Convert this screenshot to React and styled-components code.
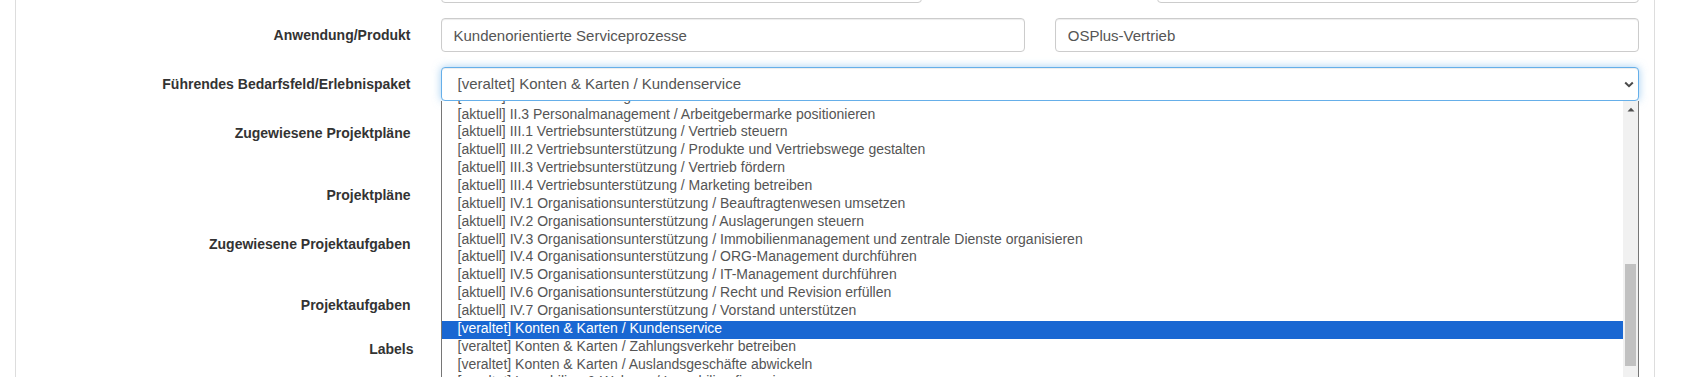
import React from "react";
import styled, { createGlobalStyle } from "styled-components";

const GlobalStyle = createGlobalStyle`
  html, body {
    margin: 0;
    padding: 0;
    height: 100%;
    overflow: hidden;
    background: #fff;
  }
  body {
    font-family: "Liberation Sans", Arial, Helvetica, sans-serif;
    font-size: 14px;
    line-height: 1.42857;
    color: #333;
  }
  *, *::before, *::after { box-sizing: border-box; }
`;

const Panel = styled.section`
  margin: -31px 0 0 15px;
  width: 1640px;
  min-height: 520px;
  padding: 0 15px;
  border-left: 1px solid #ddd;
  border-right: 1px solid #ddd;
  background: #fff;
`;

const Row = styled.div`
  display: flex;
  margin: 0 -15px;
`;

const FormGroup = styled(Row)`
  margin-bottom: 15px;
`;

const Col = styled.div`
  flex: none;
  width: ${(p) => (p.$span / 12) * 100}%;
  padding: 0 15px;
  position: relative;
`;

const ControlLabel = styled.label`
  flex: none;
  width: 25%;
  padding: 7px ${(p) => p.$pr ?? 15}px 0 15px;
  text-align: right;
  font-weight: bold;
  font-size: 14px;
  line-height: 20px;
  color: #333;
  white-space: nowrap;
`;

const TextInput = styled.input`
  display: block;
  width: 100%;
  height: 34px;
  padding: 6px 12px;
  font: 15px/20px "Liberation Sans", Arial, Helvetica, sans-serif;
  color: #555;
  background: #fff;
  border: 1px solid #ccc;
  border-radius: 4px;
  box-shadow: inset 0 1px 1px rgba(0, 0, 0, 0.075);
  outline: none;
`;

const FieldBox = styled.div`
  height: ${(p) => p.$h}px;
  border: 1px solid #ccc;
  border-radius: 4px;
  background: #fff;
`;

const SelectBox = styled.div`
  display: flex;
  align-items: center;
  height: 34px;
  padding: 0 4px 0 16px;
  font-size: 15px;
  line-height: 20px;
  color: #555;
  background: #fff;
  border: 1px solid #66afe9;
  border-radius: 4px;
  box-shadow: inset 0 1px 1px rgba(0, 0, 0, 0.075),
    0 0 8px rgba(102, 175, 233, 0.6);
`;

const SelectValue = styled.span`
  flex: 1;
  white-space: nowrap;
  overflow: hidden;
`;

const Dropdown = styled.div`
  position: absolute;
  top: 34px;
  left: 15px;
  right: 15px;
  height: 340px;
  display: flex;
  background: #fff;
  border: 1px solid #767676;
  border-top: none;
  z-index: 10;
`;

const OptionViewport = styled.div`
  flex: 1;
  overflow: hidden;
`;

const OptionList = styled.ul`
  list-style: none;
  margin: -12.3px 0 0;
  padding: 0;
`;

const Option = styled.li`
  height: 17.87px;
  line-height: 14.87px;
  padding: 0 0 3px 16px;
  font-size: 14px;
  white-space: nowrap;
  color: ${(p) => (p.$selected ? "#fff" : "#555")};
  background: ${(p) => (p.$selected ? "#1967d2" : "transparent")};
`;

const ScrollTrack = styled.div`
  flex: none;
  width: 15px;
  display: flex;
  flex-direction: column;
  align-items: center;
  background: #f1f1f1;
`;

const ScrollArrow = styled.div`
  height: 17px;
  width: 15px;
  display: flex;
  align-items: center;
  justify-content: center;
`;

const ScrollThumb = styled.div`
  margin-top: ${(p) => p.$offset}px;
  width: 11px;
  height: ${(p) => p.$size}px;
  background: #c1c1c1;
`;

const options = [
  "[aktuell] II.2 Personalmanagement / Personal entwickeln",
  "[aktuell] II.3 Personalmanagement / Arbeitgebermarke positionieren",
  "[aktuell] III.1 Vertriebsunterstützung / Vertrieb steuern",
  "[aktuell] III.2 Vertriebsunterstützung / Produkte und Vertriebswege gestalten",
  "[aktuell] III.3 Vertriebsunterstützung / Vertrieb fördern",
  "[aktuell] III.4 Vertriebsunterstützung / Marketing betreiben",
  "[aktuell] IV.1 Organisationsunterstützung / Beauftragtenwesen umsetzen",
  "[aktuell] IV.2 Organisationsunterstützung / Auslagerungen steuern",
  "[aktuell] IV.3 Organisationsunterstützung / Immobilienmanagement und zentrale Dienste organisieren",
  "[aktuell] IV.4 Organisationsunterstützung / ORG-Management durchführen",
  "[aktuell] IV.5 Organisationsunterstützung / IT-Management durchführen",
  "[aktuell] IV.6 Organisationsunterstützung / Recht und Revision erfüllen",
  "[aktuell] IV.7 Organisationsunterstützung / Vorstand unterstützen",
  "[veraltet] Konten & Karten / Kundenservice",
  "[veraltet] Konten & Karten / Zahlungsverkehr betreiben",
  "[veraltet] Konten & Karten / Auslandsgeschäfte abwickeln",
  "[veraltet] Immobilien & Wohnen / Immobilien finanzieren",
  "[veraltet] Immobilien & Wohnen / Immobilien vermitteln",
  "[veraltet] Vorsorge & Absicherung / Altersvorsorge planen",
];

const SELECTED = "[veraltet] Konten & Karten / Kundenservice";

function Chevron() {
  return (
    <svg width="10" height="7" viewBox="0 0 10 7" aria-hidden="true">
      <path d="M1.2 1.5 L5 5.2 L8.8 1.5" fill="none" stroke="#4a4a4a" strokeWidth="2" />
    </svg>
  );
}

function UpTriangle() {
  return (
    <svg width="8" height="5" viewBox="0 0 8 5" aria-hidden="true">
      <path d="M0.5 4.5 L4 0.8 L7.5 4.5 Z" fill="#505050" />
    </svg>
  );
}

export default function App() {
  return (
    <>
      <GlobalStyle />
      <Panel>
        <FormGroup>
          <ControlLabel>Produktverantwortung</ControlLabel>
          <Col $span={9}>
            <Row>
              <Col $span={5}>
                <TextInput readOnly value="" />
              </Col>
              <Col $span={2} />
              <Col $span={5}>
                <TextInput readOnly value="" />
              </Col>
            </Row>
          </Col>
        </FormGroup>

        <FormGroup>
          <ControlLabel>Anwendung/Produkt</ControlLabel>
          <Col $span={9}>
            <Row>
              <Col $span={6}>
                <TextInput readOnly value="Kundenorientierte Serviceprozesse" />
              </Col>
              <Col $span={6}>
                <TextInput readOnly value="OSPlus-Vertrieb" />
              </Col>
            </Row>
          </Col>
        </FormGroup>

        <FormGroup>
          <ControlLabel>Führendes Bedarfsfeld/Erlebnispaket</ControlLabel>
          <Col $span={9}>
            <SelectBox role="combobox" aria-expanded="true">
              <SelectValue>{SELECTED}</SelectValue>
              <Chevron />
            </SelectBox>
            <Dropdown role="listbox">
              <OptionViewport>
                <OptionList>
                  {options.map((o) => (
                    <Option key={o} $selected={o === SELECTED} role="option">
                      {o}
                    </Option>
                  ))}
                </OptionList>
              </OptionViewport>
              <ScrollTrack>
                <ScrollArrow>
                  <UpTriangle />
                </ScrollArrow>
                <ScrollThumb $offset={146} $size={102} />
              </ScrollTrack>
            </Dropdown>
          </Col>
        </FormGroup>

        <FormGroup>
          <ControlLabel>Zugewiesene Projektpläne</ControlLabel>
          <Col $span={9}>
            <FieldBox $h={47} />
          </Col>
        </FormGroup>

        <FormGroup>
          <ControlLabel>Projektpläne</ControlLabel>
          <Col $span={9}>
            <FieldBox $h={34} />
          </Col>
        </FormGroup>

        <FormGroup>
          <ControlLabel>Zugewiesene Projektaufgaben</ControlLabel>
          <Col $span={9}>
            <FieldBox $h={46} />
          </Col>
        </FormGroup>

        <FormGroup>
          <ControlLabel>Projektaufgaben</ControlLabel>
          <Col $span={9}>
            <FieldBox $h={29} />
          </Col>
        </FormGroup>

        <FormGroup>
          <ControlLabel $pr={12}>Labels</ControlLabel>
          <Col $span={9}>
            <FieldBox $h={34} />
          </Col>
        </FormGroup>
      </Panel>
    </>
  );
}
